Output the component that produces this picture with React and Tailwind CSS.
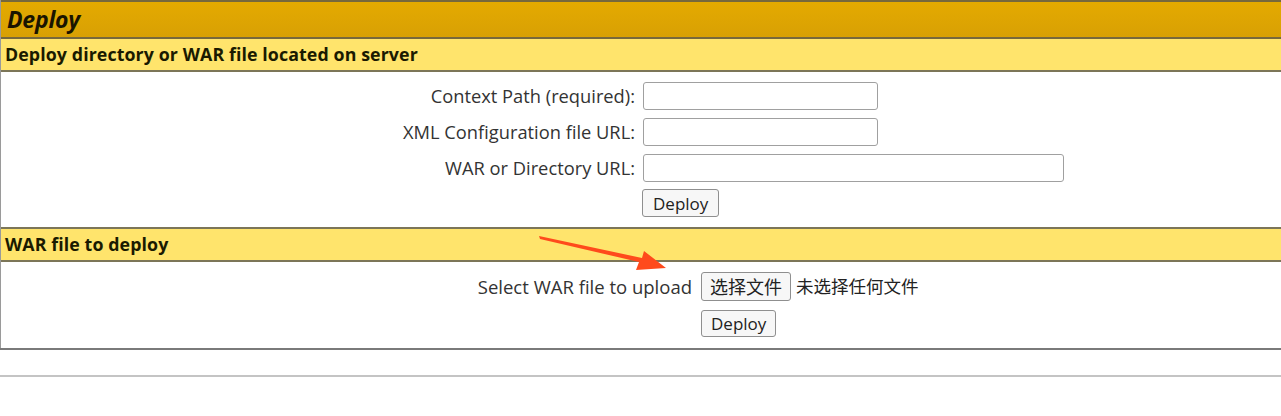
export default function App() {
  const fields = [
    { label: 'Context Path (required):', width: 'w-[235px]' },
    { label: 'XML Configuration file URL:', width: 'w-[235px]' },
    { label: 'WAR or Directory URL:', width: 'w-[421px]' },
  ];

  return (
    <div className="relative w-[1281px] h-[416px] overflow-hidden bg-white text-[#222] font-['Open_Sans','Noto_Sans_CJK_SC',sans-serif]">
      <div className="border-l border-[#9a9a9a]">
        {/* Title bar */}
        <div className="h-[39px] border-t-2 border-b-2 border-[#76683c] bg-gradient-to-b from-[#e4aa00] to-[#d8a004] pl-[6px] flex items-center">
          <span className="text-[23px] font-bold italic text-[#1a1400] leading-none tracking-[-0.2px]">Deploy</span>
        </div>

        {/* Server directory section */}
        <div className="h-[33px] border-b-2 border-[#7c7658] bg-[#ffe46c] pl-[4px] flex items-center">
          <span className="text-[17.8px] font-bold text-[#1a1a00] leading-none tracking-[0.1px]">Deploy directory or WAR file located on server</span>
        </div>
        <div className="pt-[10px] h-[155px]">
          <div className="grid grid-cols-[634px_1fr] gap-x-2 gap-y-[8px] items-center">
            {fields.map((f) => (
              <div key={f.label} className="contents">
                <label className="text-right text-[18.3px] leading-[26px] text-[#333]">{f.label}</label>
                <input
                  type="text"
                  className={`${f.width} h-[28px] border border-[#a0a0a0] rounded-[3px] bg-white`}
                />
              </div>
            ))}
            <div />
            <div>
              <button className="-ml-px -mt-px h-[28px] px-[10px] border border-[#8f8f8f] rounded-[3px] bg-[#f7f7f7] text-[17px] leading-none text-[#222]">
                Deploy
              </button>
            </div>
          </div>
        </div>

        {/* WAR upload section */}
        <div className="h-[35px] border-t-2 border-b-2 border-[#7c7658] bg-[#ffe46c] pl-[4px] flex items-center">
          <span className="text-[17.8px] font-bold text-[#1a1a00] leading-none tracking-[0.1px]">WAR file to deploy</span>
        </div>
        <div className="pt-[10px] h-[86px]">
          <div className="grid grid-cols-[691px_1fr] gap-x-[9px] gap-y-[9px] items-center">
            <span className="text-right text-[18.5px] leading-[26px] text-[#333]">Select WAR file to upload</span>
            <div className="flex items-center gap-[5px]">
              <button className="h-[29px] px-[8px] border border-[#8f8f8f] rounded-[3px] bg-[#f7f7f7] text-[18px] leading-none text-[#222]">
                选择文件
              </button>
              <span className="text-[17.5px] text-[#222]">未选择任何文件</span>
            </div>
            <div />
            <div>
              <button className="h-[27px] px-[9px] border border-[#8f8f8f] rounded-[3px] bg-[#f7f7f7] text-[17px] leading-none text-[#222]">
                Deploy
              </button>
            </div>
          </div>
        </div>
      </div>
      <div className="h-[2px] bg-[#7a7a7a]" />
      <div className="h-[25px]" />
      <div className="h-[2px] bg-[#c4c4c4]" />

      {/* annotation arrow */}
      <svg className="absolute left-[535px] top-[230px]" width="140" height="45" viewBox="0 0 140 45">
        <path d="M4 6 L5 9 L104 32 L101 40 L131 38 L109 21 L107 28 Z" fill="#ff4a1c" />
      </svg>
    </div>
  );
}
